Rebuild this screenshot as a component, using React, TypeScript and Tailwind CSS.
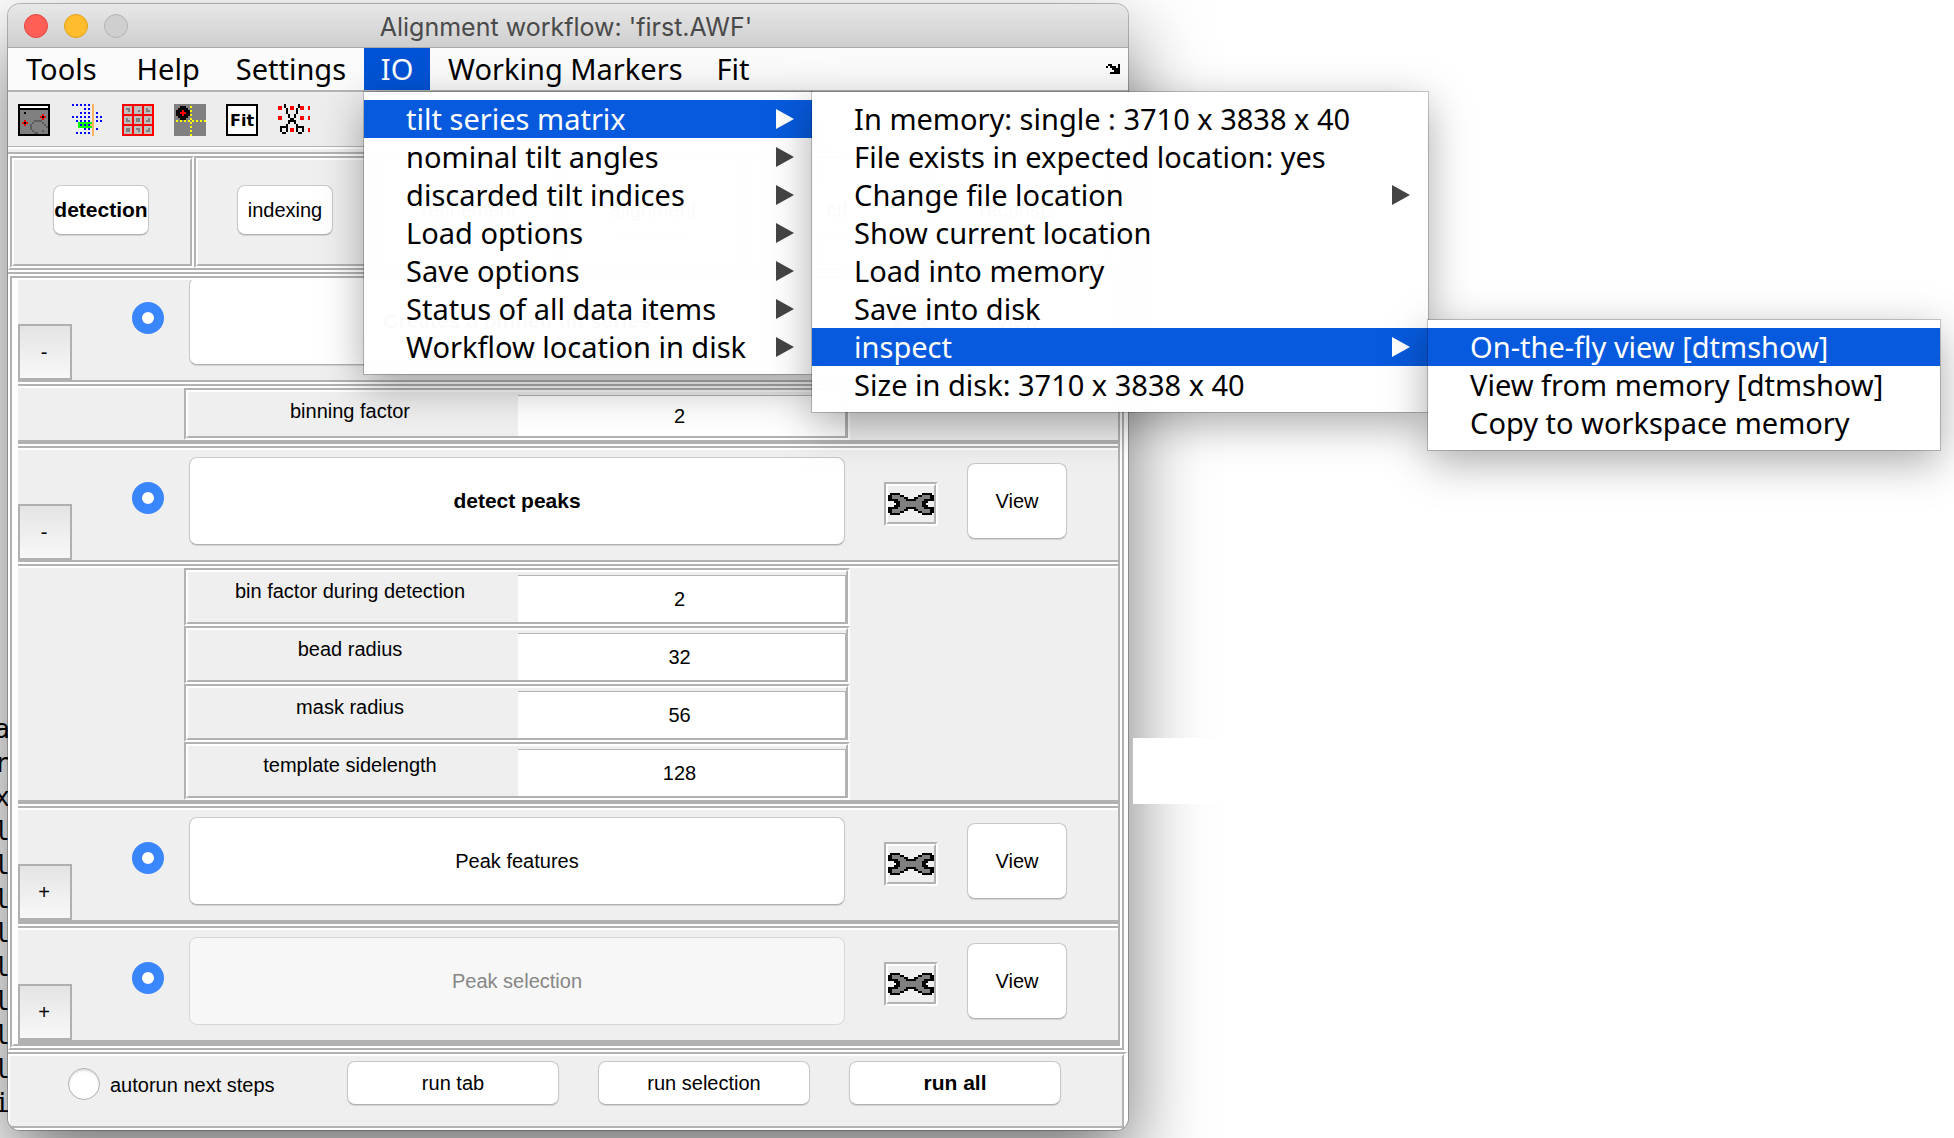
import type { ReactNode } from 'react';
import clsx from 'clsx';

const ARROW = ['.xx...x', 'x.xxx.x', '...xxxx', '....xxx', '..xxxxx'];

const WRENCH = [
  '.bbbbb...........bbbbb.',
  'bbggggbb.......bbggggbb',
  'bbggggggbb...bbggggggbb',
  'bbbbbggggbbbbbggggbbbbb',
  '...bbbgggggggggggbbb...',
  '....bbgggggggggggbb....',
  '...bbbgggggggggggbbb...',
  'bbbbbggggbbbbbggggbbbbb',
  'bbggggggbb...bbggggggbb',
  'bbggggbb.......bbggggbb',
  '.bbbbb...........bbbbb.',
];

const MICROGRAPH = [
  'bbbbbbbbbbbbbbbb',
  'bwwwwwwwwwwwwwwb',
  'bbbbbbbbbbbbbbbb',
  'bggggggggggggggb',
  'bggbgggggggggggb',
  'bgggggggggggrggb',
  'bggggggggggrbrgb',
  'bgggggggggggrggb',
  'bggrggggddddgggb',
  'bgrbrggdggggdggb',
  'bggrggdggggggdgb',
  'bgggggdgggggggdb',
  'bgggggdggggggggb',
  'bggggggdggggdggb',
  'bgggggggddgggggb',
  'bbbbbbbbbbbbbbbb',
];

const MARKERS = [
  '.u.u.u.u.u.o....',
  '...........o....',
  '.......u.u.o....',
  '...........o....',
  '.....u.u.u.o.u..',
  '...........o....',
  '.u.u.u.u.u.o.u.u',
  '...........o....',
  '...u.u.u.u.o.u.u',
  '....nnnnnnno....',
  '....nununuoo....',
  '....nnnnnnno....',
  '.......u.u.o.u..',
  '...........o....',
  '...u.u.u.u.o....',
  '...........o....',
];

const GALLERY = [
  'rrrrrrrrrrrrrrrr',
  'rssssrssssrssssr',
  'rsggsrssssrsgssr',
  'rssgsrssgsrsggsr',
  'rssssrssssrssssr',
  'rrrrrrrrrrrrrrrr',
  'rssssrssssrssssr',
  'rsgssrsggsrssgsr',
  'rsggsrsggsrsggsr',
  'rssssrssssrssssr',
  'rrrrrrrrrrrrrrrr',
  'rssssrssssrssssr',
  'rsggsrsggsrssgsr',
  'rsggsrssgsrsggsr',
  'rssssrssssrssssr',
  'rrrrrrrrrrrrrrrr',
];

const CROSSHAIR = [
  'gggggggggggggggg',
  'gggbbbggyggggggg',
  'ggbbbbbggggggggg',
  'gbbbrbbbyggggggg',
  'gbbrrrbbgggggggg',
  'gbbbrbbbyggggggg',
  'ggbbbbbggggggggg',
  'gggbbbggyggggggg',
  'gygygygygygygygy',
  'ggggggggyggggggg',
  'gggggggggggggggg',
  'ggggggggyggggggg',
  'gggggggggggggggg',
  'ggggggggyggggggg',
  'gggggggggggggggg',
  'ggggggggyggggggg',
];

const SCISSORS = [
  '...b......b.....',
  'rr.b..rr..brr..r',
  'rr..b.rr.b.rr..r',
  '....b....b......',
  '....b....b......',
  '.....b..b.......',
  'rr...b..b..rr..r',
  'rr....bb...rr..r',
  '.....bbbb.......',
  '.....b..b.......',
  '....b....b......',
  '.bbbb....bbbb...',
  '.b..b.rr.b..b..r',
  '.b..b.rr.b..b..r',
  '..bb......bb....',
  '................',
];

const INK: Record<string, string> = {
  x: '#000000',
  b: '#000000',
  g: '#808080',
  d: '#5c5c5c',
  s: '#c0c0c0',
  w: '#ffffff',
  r: '#ff0000',
  u: '#0000ff',
  o: '#ffb066',
  n: '#00ff00',
  y: '#ffff00',
};

function PixelIcon({ rows, className }: { rows: string[]; className?: string }) {
  return (
    <svg
      viewBox={`0 0 ${rows[0].length} ${rows.length}`}
      shapeRendering="crispEdges"
      className={className}
      aria-hidden="true"
    >
      {rows.flatMap((row, y) =>
        row
          .split('')
          .map((c, x) => (c === '.' ? null : <rect key={`${x}-${y}`} x={x} y={y} width={1} height={1} fill={INK[c]} />))
      )}
    </svg>
  );
}

interface BoxProps {
  className?: string;
  inner?: string;
  children: ReactNode;
}

// Grey/white groove used around tabs, parameters and tool buttons
function Etched({ className, inner, children }: BoxProps) {
  return (
    <div className={clsx('flex border-2 border-t-[#b2b2b2] border-l-[#b2b2b2] border-r-white border-b-white', className)}>
      <div
        className={clsx(
          'flex-1 min-w-0 border-2 border-t-white border-l-white border-r-[#b2b2b2] border-b-[#b2b2b2]',
          inner
        )}
      >
        {children}
      </div>
    </div>
  );
}

// Full-width section whose left edge is hidden by the window frame
function Panel({ className, children }: BoxProps) {
  return (
    <div className="border-t-2 border-t-[#b2b2b2] border-b-2 border-b-white border-r-4 border-r-white">
      <div
        className={clsx(
          'border-2 border-t-white border-l-white border-r-[#b2b2b2] border-b-[#b2b2b2]',
          className
        )}
      >
        {children}
      </div>
    </div>
  );
}

interface PushButtonProps {
  label: string;
  bold?: boolean;
  disabled?: boolean;
  className?: string;
}

function PushButton({ label, bold, disabled, className }: PushButtonProps) {
  return (
    <button
      disabled={disabled}
      className={clsx(
        'flex items-center justify-center rounded-lg border whitespace-nowrap',
        disabled
          ? 'bg-[#f7f7f7] border-[#d6d6d6] text-[#868686]'
          : 'bg-white border-[#c8c8c8] border-b-[#b0b0b0] text-black shadow-[0_1px_1px_rgba(0,0,0,0.12)]',
        bold && 'font-bold text-[21px]',
        className
      )}
    >
      {label}
    </button>
  );
}

interface MenuEntry {
  label: string;
  arrow?: boolean;
  children?: MenuEntry[];
}

const IO_MENU: MenuEntry[] = [
  {
    label: 'tilt series matrix',
    arrow: true,
    children: [
      { label: 'In memory: single : 3710 x 3838 x 40' },
      { label: 'File exists in expected location: yes' },
      { label: 'Change file location', arrow: true },
      { label: 'Show current location' },
      { label: 'Load into memory' },
      { label: 'Save into disk' },
      {
        label: 'inspect',
        arrow: true,
        children: [
          { label: 'On-the-fly view [dtmshow]' },
          { label: 'View from memory [dtmshow]' },
          { label: 'Copy to workspace memory' },
        ],
      },
      { label: 'Size in disk: 3710 x 3838 x 40' },
    ],
  },
  { label: 'nominal tilt angles', arrow: true },
  { label: 'discarded tilt indices', arrow: true },
  { label: 'Load options', arrow: true },
  { label: 'Save options', arrow: true },
  { label: 'Status of all data items', arrow: true },
  { label: 'Workflow location in disk', arrow: true },
];

const MENU_WIDTH = ['w-[448px]', 'w-[616px]', 'w-[512px]'];

function Menu({ items, level = 0, className }: { items: MenuEntry[]; level?: number; className?: string }) {
  return (
    <ul
      role="menu"
      className={clsx(
        'absolute z-10 py-2 bg-white/98 shadow-[0_0_0_1px_rgba(0,0,0,0.2),0_12px_40px_rgba(0,0,0,0.34)]',
        MENU_WIDTH[level],
        className
      )}
    >
      {items.map((item, i) => {
        const active = Boolean(item.children) || (level === 2 && i === 0);
        return (
          <li key={item.label} role="none" className="relative">
            <button
              role="menuitem"
              className={clsx(
                'flex w-full h-[38px] items-center justify-between pl-[42px] pr-[18px] text-left whitespace-nowrap',
                active ? 'bg-[#075add] text-white' : 'text-black'
              )}
            >
              {item.label}
              {item.arrow && (
                <svg viewBox="0 0 18 20" className={clsx('w-[18px] h-5', active ? 'fill-white' : 'fill-[#444444]')}>
                  <path d="M0 0 L18 10 L0 20 Z" />
                </svg>
              )}
            </button>
            {item.children && <Menu items={item.children} level={level + 1} className="left-full -top-2" />}
          </li>
        );
      })}
    </ul>
  );
}

function MenuBar() {
  return (
    <nav className="flex items-center h-11 border-b-2 border-[#b4b4b4] bg-[#fbfbfb] font-['Noto_Sans',sans-serif] text-[29px] leading-9 text-black">
      <button className="h-full pl-[18px] pr-[22px]">Tools</button>
      <button className="h-full px-[18px]">Help</button>
      <button className="h-full px-[18px]">Settings</button>
      <div className="relative h-full">
        <button className="h-full w-[66px] bg-[#0053d6] text-white">IO</button>
        <Menu items={IO_MENU} className="left-0 top-11" />
      </div>
      <button className="h-full pl-[18px] pr-4">Working Markers</button>
      <button className="h-full px-[18px]">Fit</button>
      <button aria-label="Dock window" className="ml-auto mr-2">
        <PixelIcon rows={ARROW} className="w-3.5 h-2.5" />
      </button>
    </nav>
  );
}

const TOOLS = [
  { name: 'Micrograph', rows: MICROGRAPH },
  { name: 'Markers', rows: MARKERS },
  { name: 'Gallery', rows: GALLERY },
  { name: 'Crosshair', rows: CROSSHAIR },
];

function ToolBar() {
  return (
    <div className="mt-0.5 flex items-center gap-5 h-[53px] pl-2.5 bg-[#ededed] border-b border-[#b4b4b4]">
      {TOOLS.map((tool) => (
        <button key={tool.name} aria-label={tool.name}>
          <PixelIcon rows={tool.rows} className="size-8" />
        </button>
      ))}
      <button className="size-8 border-2 border-black bg-white pt-0.5 font-['DejaVu_Sans',sans-serif] text-base leading-6 font-bold">
        Fit
      </button>
      <button aria-label="Trim markers">
        <PixelIcon rows={SCISSORS} className="size-8" />
      </button>
    </div>
  );
}

const TABS = ['detection', 'indexing', 'refinement', 'alignment', 'ctf', 'reconst...'];

interface Param {
  label: string;
  value: string;
}

interface Step {
  label: string;
  bold?: boolean;
  disabled?: boolean;
  params?: Param[];
}

const STEPS: Step[] = [
  { label: 'Creates a binned tilt series', bold: true, params: [{ label: 'binning factor', value: '2' }] },
  {
    label: 'detect peaks',
    bold: true,
    params: [
      { label: 'bin factor during detection', value: '2' },
      { label: 'bead radius', value: '32' },
      { label: 'mask radius', value: '56' },
      { label: 'template sidelength', value: '128' },
    ],
  },
  { label: 'Peak features' },
  { label: 'Peak selection', disabled: true },
];

function StepHeader({ step }: { step: Step }) {
  return (
    <div className="flex items-start h-[110px]">
      <button className="mt-[54px] w-[54px] h-14 border-2 border-[#b0b0b0] bg-linear-to-b from-[#e4e4e4] to-[#f8f8f8] pr-0.5">
        {step.params ? '-' : '+'}
      </button>
      <input
        type="radio"
        defaultChecked
        name={step.label}
        aria-label={step.label}
        className="ml-[60px] mt-8 size-8 shrink-0 appearance-none rounded-full border-[10px] border-[#3a87fd] bg-white"
      />
      <PushButton label={step.label} bold={step.bold} disabled={step.disabled} className="ml-[25px] mt-[7px] h-[88px] flex-1" />
      <Etched className="ml-[39px] mt-8 w-[54px] h-11" inner="flex">
        <button aria-label={`Configure ${step.label}`} className="flex flex-1 items-center justify-center">
          <PixelIcon rows={WRENCH} className="w-[46px] h-[22px]" />
        </button>
      </Etched>
      <PushButton label="View" className="ml-[29px] mt-[13px] mr-[51px] w-[100px] h-[76px]" />
    </div>
  );
}

function ParamRow({ param, compact }: { param: Param; compact: boolean }) {
  return (
    <Etched className={compact ? 'h-[52px]' : 'h-[58px]'} inner="flex">
      <label htmlFor={param.label} className="flex-1 pt-[7px] pr-1.5 text-center leading-6">
        {param.label}
      </label>
      <input
        id={param.label}
        defaultValue={param.value}
        className="mt-[3px] w-[328px] border-t border-r border-[#b4b4b4] bg-white pr-1 text-center"
      />
    </Etched>
  );
}

function StepList() {
  return (
    <Etched inner="overflow-hidden">
      <div className="-mt-3.5 border-l-4 border-white">
        {STEPS.map((step) => (
          <section key={step.label} className="border-b-2 border-white last:border-b-0">
            <div className="border-t-2 border-t-[#b2b2b2] border-b-4 border-b-[#b2b2b2]">
              <div className="border-t-2 border-white">
                <StepHeader step={step} />
              </div>
              {step.params && (
                <>
                  <div className="h-0.5 bg-[#b2b2b2]" />
                  <div className="h-0.5 bg-white" />
                  <div className="h-0.5 bg-[#b2b2b2]" />
                  <div className="h-0.5 bg-white" />
                  <div className="pl-[166px] pr-[268px]">
                    {step.params.map((param) => (
                      <ParamRow key={param.label} param={param} compact={step.params?.length === 1} />
                    ))}
                  </div>
                </>
              )}
            </div>
          </section>
        ))}
      </div>
    </Etched>
  );
}

const CONSOLE_TAIL = ['a', 'r', 'x', 'l', 'l', 'l', 'l', 'l', 'l', 'l', 'l', 'i'];

export default function App() {
  return (
    <div className="relative min-h-screen overflow-hidden bg-white pl-2 pt-1 pb-2 font-['Liberation_Sans',Arial,sans-serif] text-xl leading-6 text-black">
      {/* Console window showing behind the left edge */}
      <div
        aria-hidden="true"
        className="absolute left-0 top-[712px] flex w-2.5 flex-col items-end overflow-hidden font-['DejaVu_Sans_Mono',monospace] text-[26px] leading-[34px]"
      >
        {CONSOLE_TAIL.map((c, i) => (
          <span key={i}>{c}</span>
        ))}
      </div>

      <main className="relative w-full max-w-[1120px] rounded-xl bg-[#efefef] shadow-[0_0_0_1px_rgba(0,0,0,0.25),0_34px_80px_rgba(0,0,0,0.55)]">
        <header className="flex items-center h-11 rounded-t-xl pl-4 border-b border-[#a9a9a9] bg-linear-to-b from-[#e8e8e8] to-[#cecece]">
          <div className="flex gap-4">
            <button aria-label="Close" className="size-6 rounded-full border border-[#e2463f] bg-[#ff5f57]" />
            <button aria-label="Minimize" className="size-6 rounded-full border border-[#e1a116] bg-[#ffbd2e]" />
            <button aria-label="Zoom" className="size-6 rounded-full border border-[#b4b4b4] bg-[#cfcfcf]" />
          </div>
          <h1 className="flex-1 pt-0.5 pr-[124px] text-center font-['Inter',sans-serif] text-[25px] leading-8 text-[#4a4a4a]">
            Alignment workflow: 'first.AWF'
          </h1>
        </header>

        <div className="relative z-10">
          <MenuBar />
        </div>
        <ToolBar />
        <div className="h-[5px] border-t-2 border-white" />

        <Panel className="flex">
          {TABS.map((tab, i) => (
            <Etched key={tab} className="h-28 w-[184px]" inner="flex items-center justify-center pb-1 pr-0.5">
              <PushButton label={tab} bold={i === 0} className="w-24 h-[50px]" />
            </Etched>
          ))}
        </Panel>

        <Panel>
          <StepList />
        </Panel>

        <div className="overflow-hidden rounded-b-xl">
          <Panel className="flex h-[74px] items-start pt-[5px] pl-[58px] pr-[61px]">
            <label className="mt-[7px] flex flex-1 items-center gap-2.5">
              <input
                type="radio"
                name="autorun"
                className="size-8 appearance-none rounded-full border border-[#b0b0b0] bg-white shadow-[inset_0_2px_2px_rgba(0,0,0,0.12)]"
              />
              <span className="pt-0.5">autorun next steps</span>
            </label>
            <div className="flex gap-[39px]">
              <PushButton label="run tab" className="w-[212px] h-11" />
              <PushButton label="run selection" className="w-[212px] h-11" />
              <PushButton label="run all" bold className="w-[212px] h-11" />
            </div>
          </Panel>
        </div>
      </main>

      <div className="absolute left-[1133px] top-[738px] h-[66px] w-32 bg-white" />
    </div>
  );
}
